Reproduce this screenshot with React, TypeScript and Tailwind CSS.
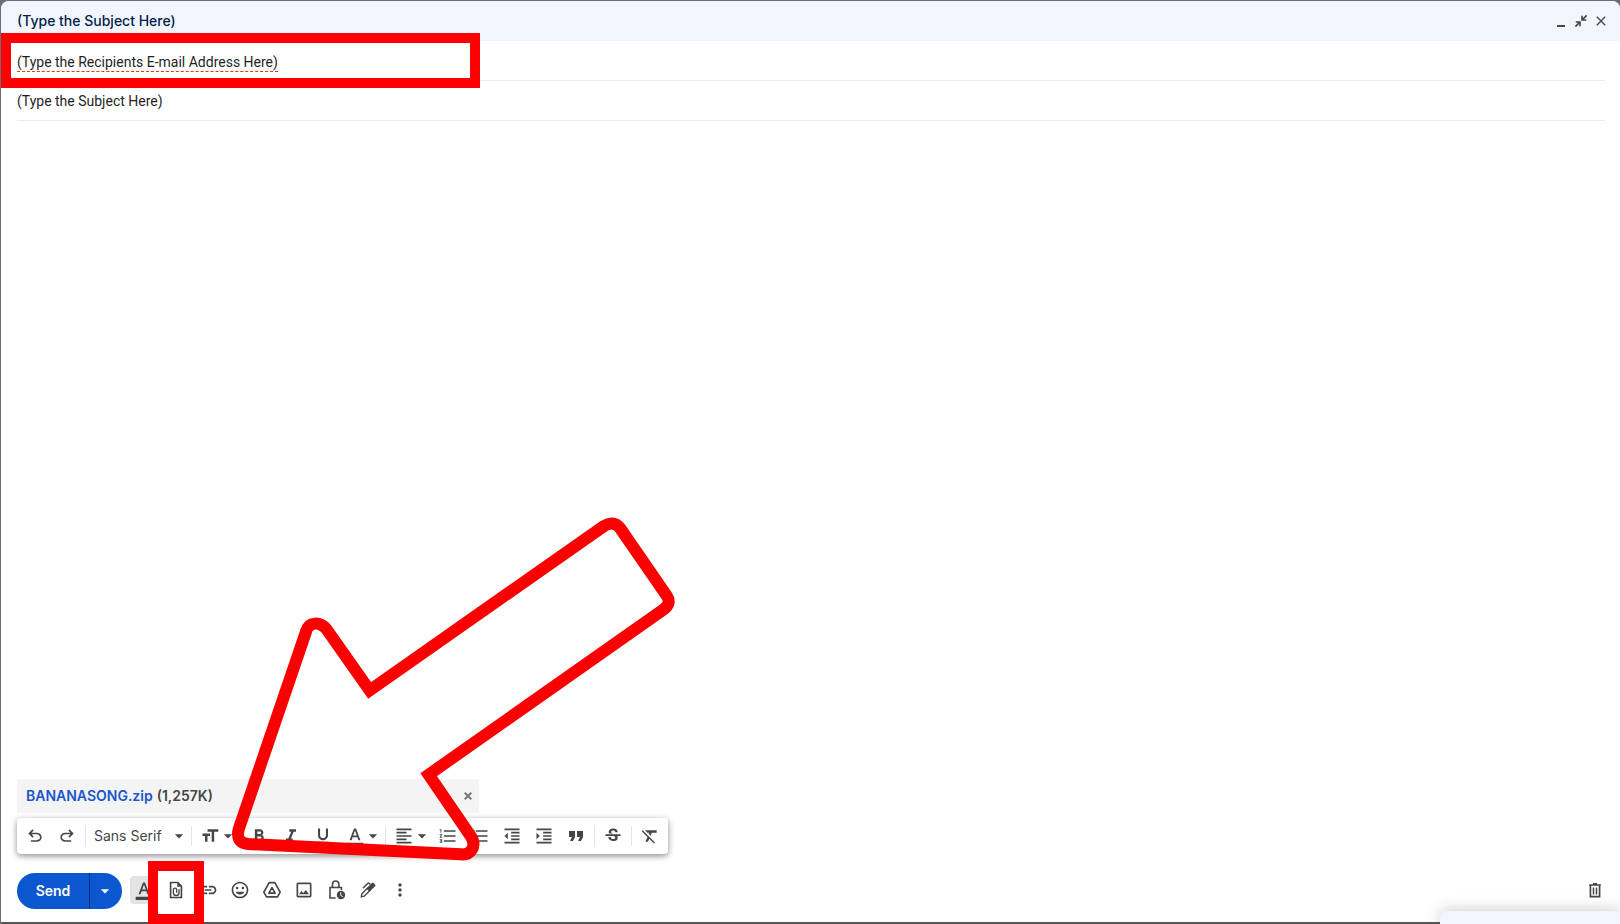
import type { ReactNode } from "react";
import {
  MdArrowDropDown,
  MdClose,
  MdFormatAlignLeft,
  MdFormatBold,
  MdFormatClear,
  MdFormatIndentDecrease,
  MdFormatIndentIncrease,
  MdFormatItalic,
  MdFormatListBulleted,
  MdFormatListNumbered,
  MdFormatQuote,
  MdFormatSize,
  MdFormatUnderlined,
  MdMoreVert,
  MdOutlineFormatColorText,
  MdOutlineImage,
  MdOutlineInsertEmoticon,
  MdStrikethroughS,
} from "react-icons/md";

function Icon({ children, size = 20 }: { children: ReactNode; size?: number }) {
  return (
    <svg width={size} height={size} viewBox="0 0 24 24" fill="currentColor" aria-hidden="true">
      {children}
    </svg>
  );
}

const UndoIcon = () => (
  <Icon>
    <path d="M7 19v-2h7.1q1.575 0 2.738-1T18 13.5T16.838 11T14.1 10H7.8l2.6 2.6L9 14L4 9l5-5l1.4 1.4L7.8 8h6.3q2.425 0 4.163 1.575T20 13.5t-1.737 3.925T14.1 19z" />
  </Icon>
);

const RedoIcon = () => (
  <Icon>
    <path d="M9.9 19q-2.425 0-4.163-1.575T4 13.5t1.738-3.925T9.9 8h6.3l-2.6-2.6L15 4l5 5l-5 5l-1.4-1.4l2.6-2.6H9.9q-1.575 0-2.738 1T6 13.5T7.163 16T9.9 17H17v2z" />
  </Icon>
);

const AttachIcon = () => (
  <Icon>
    <path
      d="M5.5 3h8.7l4.3 4.3V21h-13z"
      fill="none"
      stroke="currentColor"
      strokeWidth="2"
      strokeLinejoin="round"
    />
    <path d="M13.5 3v5h5z" />
    <path
      d="M15.6 11v4.2a3.4 3.4 0 0 1-6.8 0v-3.4a2 2 0 0 1 4 0v3.6"
      fill="none"
      stroke="currentColor"
      strokeWidth="1.6"
    />
  </Icon>
);

const LinkIcon = () => (
  <Icon>
    <path d="M11 17H7q-2.075 0-3.538-1.463T2 12t1.463-3.537T7 7h4v2H7q-1.25 0-2.125.875T4 12t.875 2.125T7 15h4zm-3-4v-2h8v2zm5 4v-2h4q1.25 0 2.125-.875T20 12t-.875-2.125T17 9h-4V7h4q2.075 0 3.538 1.463T22 12t-1.463 3.538T17 17z" />
  </Icon>
);

const DriveIcon = () => (
  <Icon>
    <g fill="none" stroke="currentColor" strokeWidth="2" strokeLinejoin="round">
      <path d="M8.6 3.2h6.8l6.4 11.4-3.2 5.6H5.4l-3.2-5.6z" />
      <path d="M12 9.2l3.7 6.6H8.3z" />
    </g>
  </Icon>
);

const LockClockIcon = () => (
  <Icon size={24}>
    <path
      d="M11.5 20H6V9.5h11.5v2.5M8.5 9.5V6.2a3.2 3.2 0 0 1 6.4 0v3.3"
      fill="none"
      stroke="currentColor"
      strokeWidth="1.6"
    />
    <circle cx="17" cy="17" r="4.2" />
    <path d="M16.8 14.4v3l2 1.4" fill="none" stroke="#fff" strokeWidth="1" />
  </Icon>
);

const PenIcon = () => (
  <Icon>
    <path d="M4 20.2l.7-3.6L11.2 10l2.8 2.8-6.5 6.6z" fill="none" stroke="currentColor" strokeWidth="1.7" />
    <path d="M10.2 9.8l6.4-6.3q1-1 2 0l1.9 1.9q1 1 0 2l-6.4 6.4z" />
    <path d="M6 9.8l5.8-5.8q.7-.6 1.4 0l1.5 1.5" fill="none" stroke="currentColor" strokeWidth="1.8" />
  </Icon>
);

const TrashIcon = () => (
  <Icon>
    <path d="M5 6h14M6.5 6v14h11V6" fill="none" stroke="currentColor" strokeWidth="2" />
    <path d="M9.5 3.5h5V6h-5zM9.3 9h1.8v8.5H9.3zM12.9 9h1.8v8.5h-1.8z" />
  </Icon>
);

const ShrinkIcon = () => (
  <svg width="12" height="12" viewBox="0 0 12 12" fill="none" stroke="currentColor" strokeWidth="1.6" aria-hidden="true">
    <path d="M11.6.4L7.4 4.6M7 .8V5h4.2M.4 11.6l4.2-4.2M.8 7H5v4.2" />
  </svg>
);

const RemoveIcon = () => (
  <svg width="8" height="8" viewBox="0 0 8 8" fill="none" stroke="currentColor" strokeWidth="2" aria-hidden="true">
    <path d="M.7.7l6.6 6.6M7.3.7L.7 7.3" />
  </svg>
);

function ToolButton({ label, children }: { label: string; children: ReactNode }) {
  return (
    <button type="button" aria-label={label} className="flex h-7 w-8 shrink-0 items-center justify-center">
      {children}
    </button>
  );
}

function MenuButton({ label, children }: { label: string; children: ReactNode }) {
  return (
    <button type="button" aria-label={label} className="flex h-7 shrink-0 items-center pl-1.5">
      {children}
      <MdArrowDropDown size={20} className="-ml-0.5" />
    </button>
  );
}

const Divider = () => <div className="mx-0.5 h-5 w-px shrink-0 bg-[#e3e3e3]" />;

function FormatToolbar() {
  return (
    <div className="mt-[5px] flex h-9 w-fit items-center rounded-sm bg-white px-0.5 text-[#444746] shadow-[0_2px_6px_rgba(0,0,0,0.45)]">
      <ToolButton label="Undo">
        <UndoIcon />
      </ToolButton>
      <ToolButton label="Redo">
        <RedoIcon />
      </ToolButton>
      <Divider />
      <div className="relative flex items-center">
        <select aria-label="Font" className="w-[101px] appearance-none bg-transparent pl-1.5 text-sm">
          <option>Sans Serif</option>
        </select>
        <MdArrowDropDown size={20} className="pointer-events-none absolute right-0" />
      </div>
      <Divider />
      <MenuButton label="Size">
        <MdFormatSize size={20} />
      </MenuButton>
      <div className="flex pl-[5px]">
        <ToolButton label="Bold">
          <MdFormatBold size={20} />
        </ToolButton>
        <ToolButton label="Italic">
          <MdFormatItalic size={20} />
        </ToolButton>
        <ToolButton label="Underline">
          <MdFormatUnderlined size={20} />
        </ToolButton>
      </div>
      <MenuButton label="Text color">
        <MdOutlineFormatColorText size={20} />
      </MenuButton>
      <Divider />
      <MenuButton label="Align">
        <MdFormatAlignLeft size={20} />
      </MenuButton>
      <ToolButton label="Numbered list">
        <MdFormatListNumbered size={20} />
      </ToolButton>
      <ToolButton label="Bulleted list">
        <MdFormatListBulleted size={20} />
      </ToolButton>
      <ToolButton label="Indent less">
        <MdFormatIndentDecrease size={20} />
      </ToolButton>
      <ToolButton label="Indent more">
        <MdFormatIndentIncrease size={20} />
      </ToolButton>
      <ToolButton label="Quote">
        <MdFormatQuote size={24} />
      </ToolButton>
      <Divider />
      <ToolButton label="Strikethrough">
        <MdStrikethroughS size={20} />
      </ToolButton>
      <Divider />
      <ToolButton label="Remove formatting">
        <MdFormatClear size={20} />
      </ToolButton>
    </div>
  );
}

function ActionBar() {
  return (
    <div className="mt-[19px] flex h-9 text-[#444746]">
      <div className="flex overflow-hidden rounded-full bg-[#0b57d0] text-white">
        <button type="button" className="w-[72px] text-center text-sm font-semibold">
          Send
        </button>
        <button
          type="button"
          aria-label="More send options"
          className="flex w-[33px] items-center justify-center border-l border-[#062e6f] pr-0.5"
        >
          <MdArrowDropDown size={20} />
        </button>
      </div>
      <div className="flex flex-1 items-center pb-0.5">
        <button
          type="button"
          aria-label="Formatting options"
          className="mr-0.5 ml-2 flex size-7 items-center justify-center rounded-sm bg-[#e3e3e3]"
        >
          <MdOutlineFormatColorText size={20} />
        </button>
        <div className="relative z-10">
          <ToolButton label="Attach files">
            <AttachIcon />
          </ToolButton>
          <div className="pointer-events-none absolute -inset-x-3 -top-[15px] -bottom-5 border-10 border-[#ff0000]" />
        </div>
        <ToolButton label="Insert link">
          <LinkIcon />
        </ToolButton>
        <ToolButton label="Insert emoji">
          <MdOutlineInsertEmoticon size={20} />
        </ToolButton>
        <ToolButton label="Insert files using Drive">
          <DriveIcon />
        </ToolButton>
        <ToolButton label="Insert photo">
          <MdOutlineImage size={20} />
        </ToolButton>
        <ToolButton label="Confidential mode">
          <LockClockIcon />
        </ToolButton>
        <ToolButton label="Insert signature">
          <PenIcon />
        </ToolButton>
        <ToolButton label="More options">
          <MdMoreVert size={20} />
        </ToolButton>
        <div className="-mr-[7px] ml-auto">
          <ToolButton label="Discard draft">
            <TrashIcon />
          </ToolButton>
        </div>
      </div>
    </div>
  );
}

function RedArrow() {
  return (
    <svg
      className="pointer-events-none absolute bottom-[52px] left-[219px] z-10 h-[360px] w-[470px]"
      viewBox="0 0 1410 1080"
      fill="none"
      stroke="#fb0000"
      strokeWidth="36"
      aria-hidden="true"
    >
      <path d="M449 541L1152 48Q1180 30 1200 54L1340 257Q1356 280 1330 299L626 794L752 978C772 1010 752 1036 722 1033L85 1002C60 1000 48 985 57 955L258 365C266 334 300 334 320 358Z" />
    </svg>
  );
}

export default function App() {
  return (
    <div className="relative flex h-screen flex-col overflow-hidden bg-[#6d6d75] pt-px pl-px font-[Inter,sans-serif] text-sm text-[#1f1f1f]">
      <main className="relative flex flex-1 flex-col rounded-t-lg border-b-2 border-[#555558] bg-white">
        <header className="flex h-10 shrink-0 items-center justify-between rounded-t-lg bg-[#f2f5fd] pr-[11px] pl-4">
          <h1 className="font-medium text-[#041e49]">(Type the Subject Here)</h1>
          <div className="flex items-center gap-2.5 text-[#444746]">
            <button type="button" aria-label="Minimize" className="flex h-3 w-2 items-end">
              <span className="h-0.5 w-2 bg-[#444746]" />
            </button>
            <button type="button" aria-label="Exit full screen">
              <ShrinkIcon />
            </button>
            <button type="button" aria-label="Close" className="-ml-1">
              <MdClose size={16} />
            </button>
          </div>
        </header>

        <div className="relative mr-[15px] ml-4 flex h-10 shrink-0 items-center border-b border-[#e9ebef] font-[Roboto,sans-serif]">
          <input
            aria-label="To"
            defaultValue="(Type the Recipients E-mail Address Here)"
            className="field-sizing-content border-b border-dashed border-[#e0352b] pt-[3px] leading-[18px] outline-none"
          />
          <div className="pointer-events-none absolute -top-2 -left-4 h-[55px] w-[479px] border-10 border-[#ff0000]" />
        </div>
        <div className="mr-[15px] ml-4 flex h-10 shrink-0 items-center border-b border-[#e9ebef] font-[Roboto,sans-serif]">
          <input aria-label="Subject" defaultValue="(Type the Subject Here)" className="w-full outline-none" />
        </div>

        <textarea aria-label="Message body" className="mx-4 flex-1 resize-none outline-none" />

        <div className="px-4 pb-[13px]">
          <div className="flex h-[34px] w-[462px] items-center bg-[#f4f4f4] pr-[7px] pl-[9px] font-semibold">
            <a href="#attachment" className="text-[#1a56cf]">
              BANANASONG.zip
            </a>
            <span className="ml-1 text-[#444746]">(1,257K)</span>
            <button type="button" aria-label="Remove attachment" className="ml-auto text-[#777]">
              <RemoveIcon />
            </button>
          </div>
          <FormatToolbar />
          <ActionBar />
        </div>
        <RedArrow />
      </main>

      <div className="absolute right-0 bottom-0 h-[13px] w-[180px] rounded-tl-lg bg-[#f2f5fd] shadow-[0_0_16px_rgba(0,0,0,0.25)]" />
    </div>
  );
}
